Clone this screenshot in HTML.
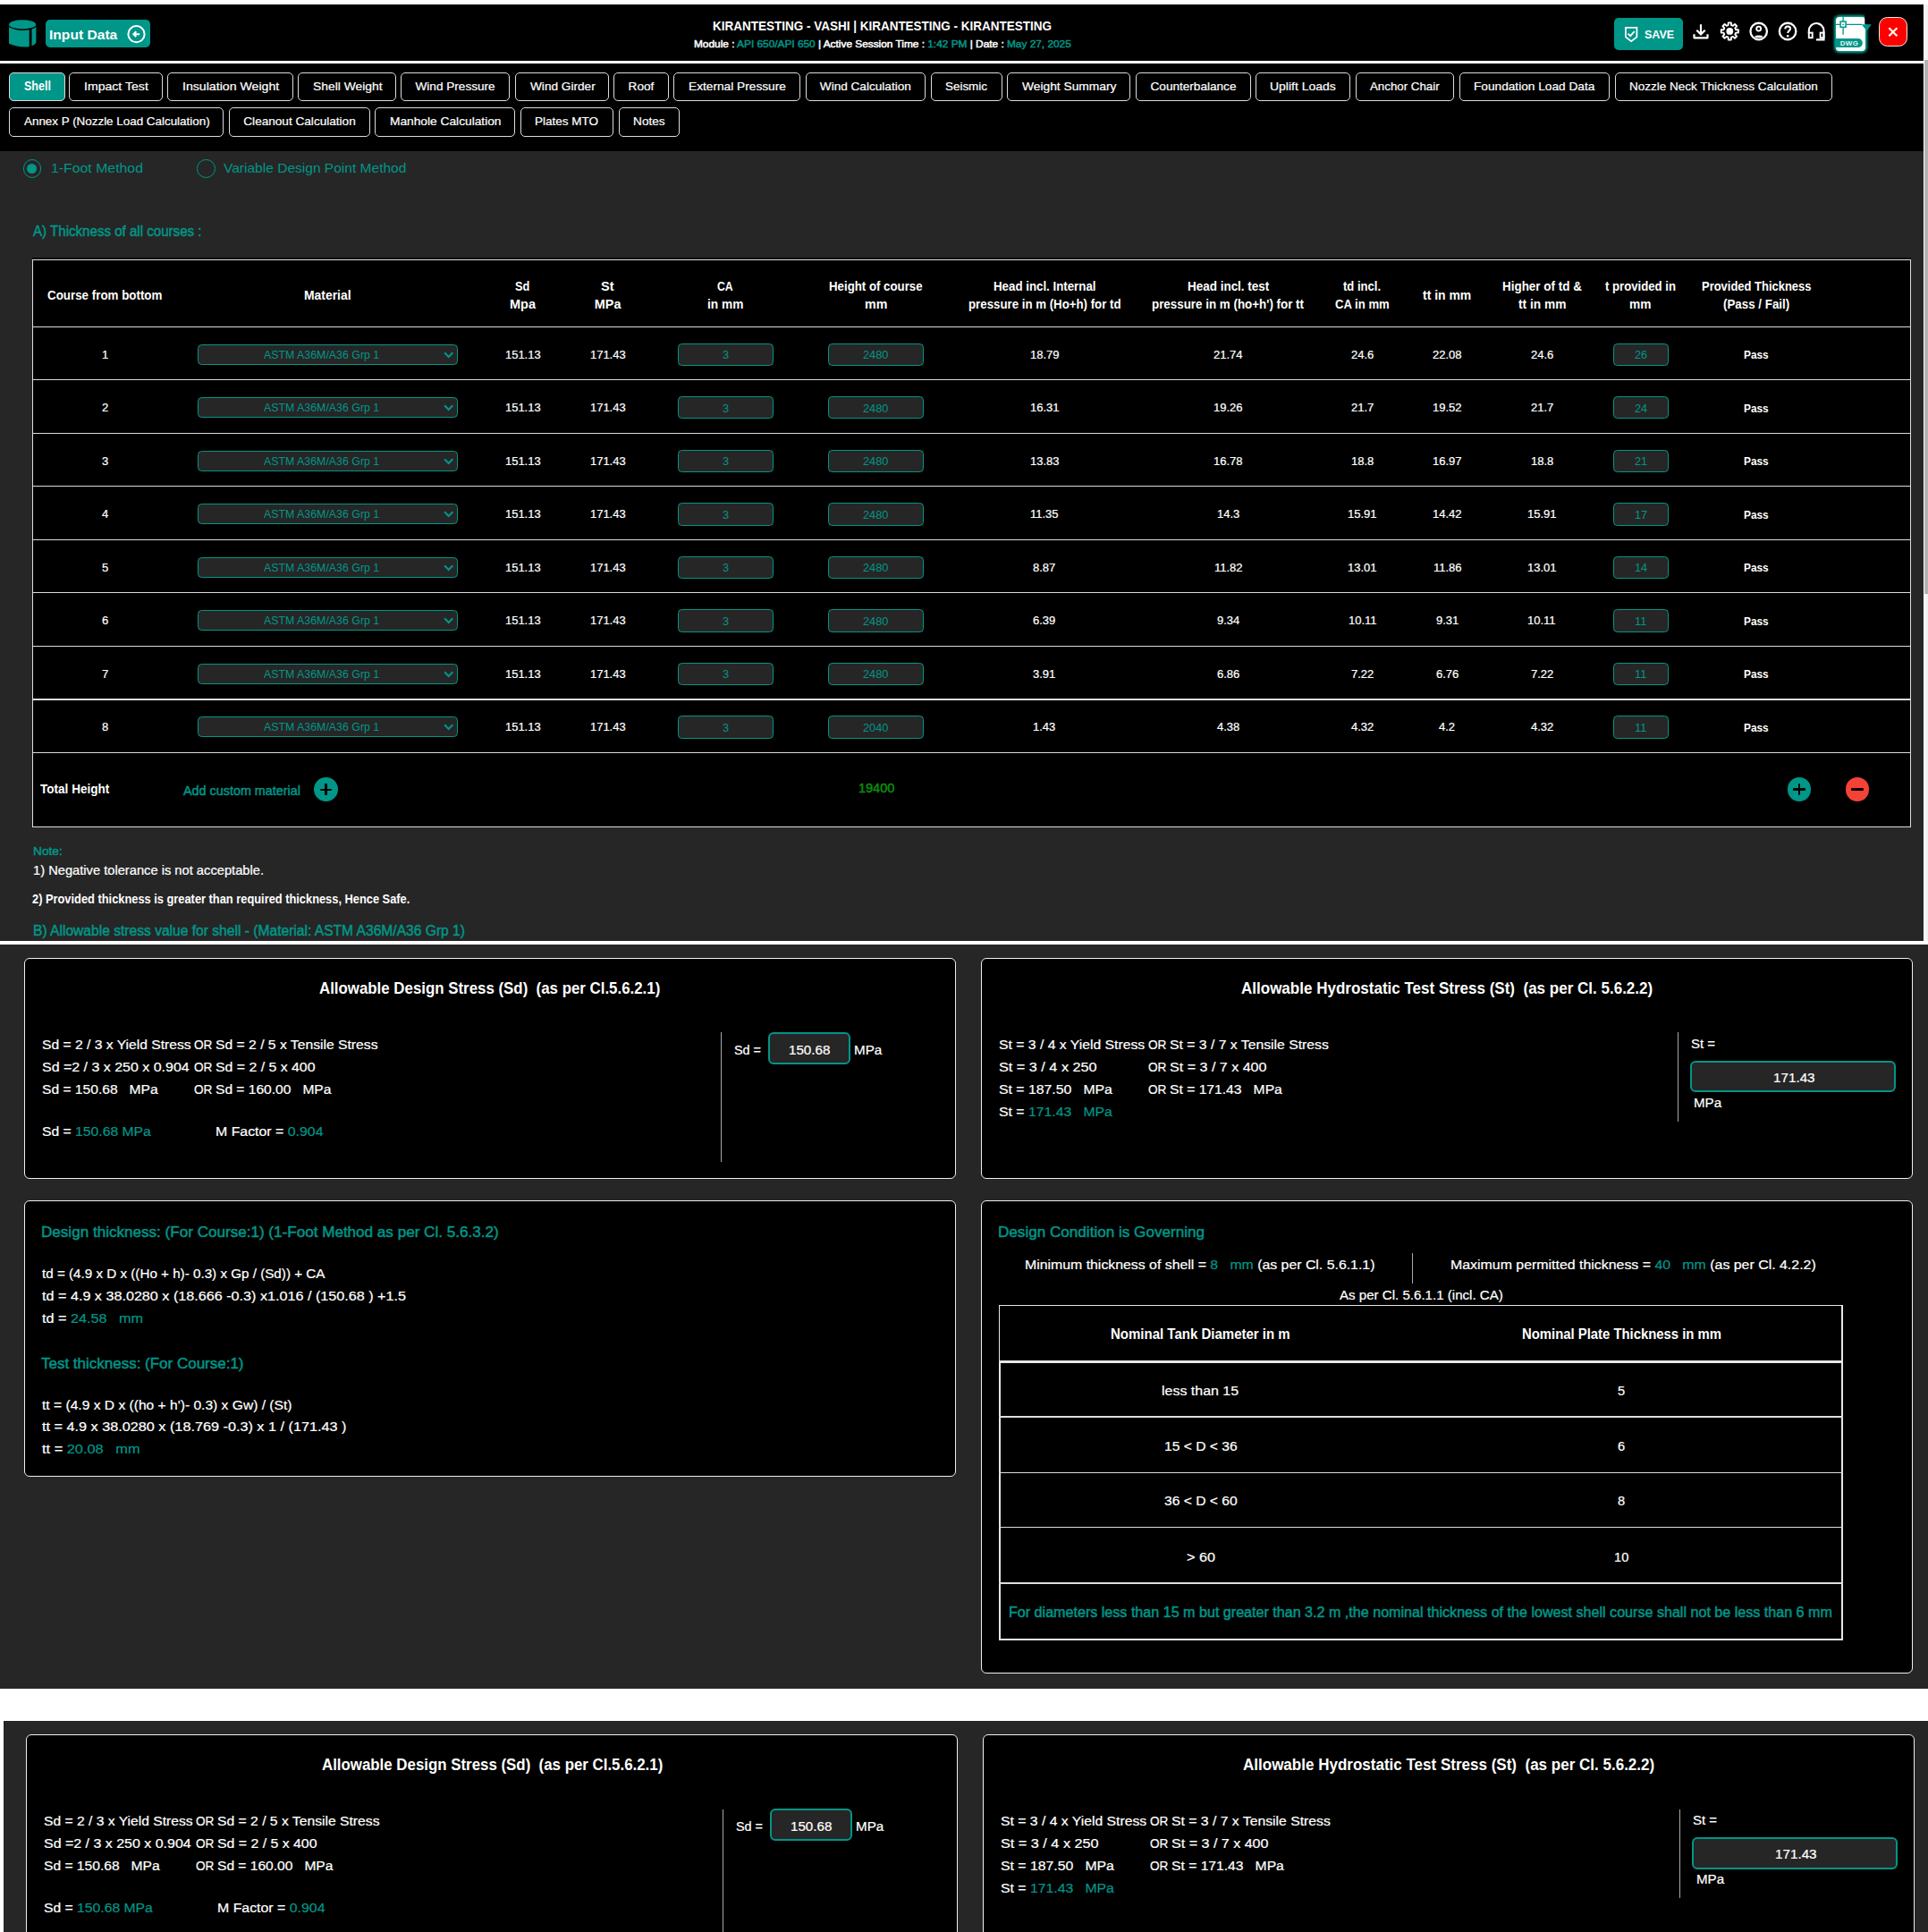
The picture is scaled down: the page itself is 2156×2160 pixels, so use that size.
<!DOCTYPE html>
<html lang="en"><head><meta charset="utf-8"><title>Shell Design</title>
<style>
html,body{margin:0;padding:0;width:2156px;height:2160px;overflow:hidden;background:#fff}
#root{position:absolute;left:0;top:0;width:2156px;height:2160px;overflow:hidden;background:#fff;font-family:"Liberation Sans",sans-serif}
.a{position:absolute;display:block}
.t{position:absolute;white-space:pre;line-height:1;transform-origin:0 0}
</style></head>
<body>
<div id="root">
<div class="a" style="left:0.00px;top:5.20px;width:2151.30px;height:63.30px;background:#000;"></div>
<div class="a" style="left:0.00px;top:68.40px;width:2151.30px;height:2.40px;background:#fff;"></div>
<div class="a" style="left:0.00px;top:70.80px;width:2151.30px;height:98.70px;background:#000;"></div>
<div class="a" style="left:0.00px;top:169.40px;width:2151.30px;height:882.40px;background:#262626;"></div>
<div class="a" style="left:2153.20px;top:4.60px;width:2.80px;height:1047.20px;background:#f2f2f2;"></div>
<div class="a" style="left:2152.40px;top:67.30px;width:3.60px;height:596.40px;background:#b2b2b2;"></div>
<div class="a" style="left:0.00px;top:1056.10px;width:2156.00px;height:831.90px;background:#262626;"></div>
<div class="a" style="left:4.00px;top:1924.20px;width:2152.00px;height:240.00px;background:#262626;"></div>
<svg class="a" style="left:9px;top:21px;width:33px;height:33px;overflow:visible" viewBox="9 21 33 33" >
<ellipse cx="25.1" cy="27.4" rx="15.1" ry="5.1" fill="#009688"/>
<path d="M10 30.300 Q20 35.600 32.700 33.300 L32.700 52.200 Q20 53.400 10 48.800 Z" fill="#009688"/>
<path d="M35.500 32.600 Q38.500 31.600 40.400 30 L40.400 47.800 Q38.800 50 35.500 51.400 Z" fill="#009688"/></svg>
<div class="a" style="left:50.50px;top:22.10px;width:117.80px;height:30.60px;background:#009688;border-radius:5px;"></div>
<svg class="a" style="left:140px;top:26px;width:25px;height:25px;overflow:visible" viewBox="140 26 25 25" ><circle cx="152.5" cy="38.200" r="9.100" fill="none" stroke="#fff" stroke-width="2"/>
<path d="M156.200 38.200H150M152.300 35.300l-2.900 2.900 2.900 2.900" fill="none" stroke="#fff" stroke-width="2.100" stroke-linecap="butt" stroke-linejoin="miter"/></svg>
<div class="a" style="left:1804.60px;top:20.00px;width:77.50px;height:36.10px;background:#009688;border-radius:5px;"></div>
<svg class="a" style="left:1814px;top:27px;width:20px;height:23px;overflow:visible" viewBox="1814 27 20 23" ><path d="M1817.900 30.800h12.500v10.600l-6.250 4.800-6.250-4.800z" fill="none" stroke="#fff" stroke-width="1.800" stroke-linejoin="miter"/>
<path d="M1820.500 37.600l2.700 2.500 4.500-5" fill="none" stroke="#fff" stroke-width="1.800"/></svg>
<svg class="a" style="left:1890px;top:24px;width:24px;height:24px;overflow:visible" viewBox="1890 24 24 24" ><path d="M1902 27.200V38M1897.300 33.800l4.700 4.600 4.700-4.600" fill="none" stroke="#fff" stroke-width="2.200" stroke-linecap="butt" stroke-linejoin="miter"/>
<path d="M1894.500 38.200v4.100h15v-4.100" fill="none" stroke="#fff" stroke-width="2.200" stroke-linejoin="round"/></svg>
<svg class="a" style="left:1922px;top:23px;width:25px;height:25px;overflow:visible" viewBox="1922 23 25 25" ><path d="M1932.61 28.11L1932.71 25.33L1935.89 25.33L1935.99 28.11L1937.91 28.90L1939.94 27.01L1942.19 29.26L1940.30 31.29L1941.09 33.21L1943.87 33.31L1943.87 36.49L1941.09 36.59L1940.30 38.51L1942.19 40.54L1939.94 42.79L1937.91 40.90L1935.99 41.69L1935.89 44.47L1932.71 44.47L1932.61 41.69L1930.69 40.90L1928.66 42.79L1926.41 40.54L1928.30 38.51L1927.51 36.59L1924.73 36.49L1924.73 33.31L1927.51 33.21L1928.30 31.29L1926.41 29.26L1928.66 27.01L1930.69 28.90Z" fill="none" stroke="#fff" stroke-width="1.900" stroke-linejoin="round"/>
<circle cx="1934.300" cy="34.900" r="3.900" fill="#fff"/></svg>
<svg class="a" style="left:1955px;top:23px;width:24px;height:24px;overflow:visible" viewBox="1955 23 24 24" ><circle cx="1966.700" cy="35" r="9.250" fill="none" stroke="#fff" stroke-width="2.300"/>
<circle cx="1966.700" cy="32.100" r="2.500" fill="none" stroke="#fff" stroke-width="1.900"/>
<ellipse cx="1966.700" cy="40.900" rx="4.300" ry="1.400" fill="#fff"/></svg>
<svg class="a" style="left:1987px;top:23px;width:24px;height:24px;overflow:visible" viewBox="1987 23 24 24" ><circle cx="1999.100" cy="35" r="9.250" fill="none" stroke="#fff" stroke-width="2.300"/>
<path d="M1996.200 32.400c.1-1.900 1.300-2.900 3-2.900s2.900 1 2.900 2.600c0 2.200-2.900 2.400-2.900 4.900" fill="none" stroke="#fff" stroke-width="2"/>
<circle cx="1999.200" cy="40.300" r="1.250" fill="#fff"/></svg>
<svg class="a" style="left:2019px;top:23px;width:24px;height:25px;overflow:visible" viewBox="2019 23 24 25" ><path d="M2022.800 37.500V34.400a8.350 8.350 0 0 1 16.700 0V44.400H2031" fill="none" stroke="#fff" stroke-width="2.100" stroke-linejoin="miter"/>
<rect x="2022.800" y="36.600" width="3.900" height="5.600" fill="none" stroke="#fff" stroke-width="1.900"/>
<rect x="2035.600" y="36.600" width="3.900" height="5.600" fill="none" stroke="#fff" stroke-width="1.900"/></svg>
<div class="a" style="left:2052.8px;top:18.6px;width:33.4px;height:38.8px;background:#fff;border-radius:4px;box-shadow:0 0 3px 2px rgba(0,190,170,.9)"></div>
<svg class="a" style="left:2050px;top:16px;width:46px;height:44px;overflow:visible" viewBox="2050 16 46 44" >
<rect x="2085.300" y="16" width="6" height="11.200" fill="#000"/>
<path d="M2081.700 27.200h11.100l-5.400 7.300z" fill="#009688"/>
<path d="M2052.800 27.400H2082M2061.100 18.600V38.800" stroke="#009688" stroke-width="1.300" fill="none"/>
<rect x="2058.100" y="24.100" width="6" height="6.300" fill="#fff" stroke="#009688" stroke-width="1.500"/>
<rect x="2060.300" y="26.700" width="1.600" height="1.300" fill="#009688"/>
<path d="M2052.800 43.100H2077.800a5 5 0 0 1 0 10H2052.800z" fill="#009688"/>
<text x="2068" y="51.100" font-family="Liberation Sans" font-weight="700" font-size="7.900" fill="#e8f5f3" text-anchor="middle" letter-spacing=".4">DWG</text></svg>
<div class="a" style="left:2101.20px;top:19.10px;width:32.30px;height:32.70px;background:#ff0000;border:1.2px solid #f0ead8;border-radius:9.5px;box-sizing:border-box;"></div>
<svg class="a" style="left:2108px;top:27px;width:18px;height:18px;overflow:visible" viewBox="2108 27 18 18" ><path d="M2112.400 31.300l9 9M2121.400 31.300l-9 9" stroke="#fff" stroke-width="2.100" stroke-linecap="butt" fill="none"/></svg>
<div class="a" style="left:10.30px;top:80.70px;width:62.50px;height:32.70px;background:#009688;border:1.5px solid #dcdcdc;border-radius:5px;box-sizing:border-box;"></div>
<div class="a" style="left:77.30px;top:80.70px;width:104.40px;height:32.70px;background:#000;border:1.5px solid #dcdcdc;border-radius:5px;box-sizing:border-box;"></div>
<div class="a" style="left:187.20px;top:80.70px;width:140.80px;height:32.70px;background:#000;border:1.5px solid #dcdcdc;border-radius:5px;box-sizing:border-box;"></div>
<div class="a" style="left:333.20px;top:80.70px;width:110.10px;height:32.70px;background:#000;border:1.5px solid #dcdcdc;border-radius:5px;box-sizing:border-box;"></div>
<div class="a" style="left:448.20px;top:80.70px;width:121.80px;height:32.70px;background:#000;border:1.5px solid #dcdcdc;border-radius:5px;box-sizing:border-box;"></div>
<div class="a" style="left:576.20px;top:80.70px;width:105.30px;height:32.70px;background:#000;border:1.5px solid #dcdcdc;border-radius:5px;box-sizing:border-box;"></div>
<div class="a" style="left:686.30px;top:80.70px;width:61.30px;height:32.70px;background:#000;border:1.5px solid #dcdcdc;border-radius:5px;box-sizing:border-box;"></div>
<div class="a" style="left:753.40px;top:80.70px;width:141.50px;height:32.70px;background:#000;border:1.5px solid #dcdcdc;border-radius:5px;box-sizing:border-box;"></div>
<div class="a" style="left:900.50px;top:80.70px;width:134.70px;height:32.70px;background:#000;border:1.5px solid #dcdcdc;border-radius:5px;box-sizing:border-box;"></div>
<div class="a" style="left:1041.00px;top:80.70px;width:79.60px;height:32.70px;background:#000;border:1.5px solid #dcdcdc;border-radius:5px;box-sizing:border-box;"></div>
<div class="a" style="left:1126.20px;top:80.70px;width:138.10px;height:32.70px;background:#000;border:1.5px solid #dcdcdc;border-radius:5px;box-sizing:border-box;"></div>
<div class="a" style="left:1270.20px;top:80.70px;width:128.60px;height:32.70px;background:#000;border:1.5px solid #dcdcdc;border-radius:5px;box-sizing:border-box;"></div>
<div class="a" style="left:1404.00px;top:80.70px;width:106.30px;height:32.70px;background:#000;border:1.5px solid #dcdcdc;border-radius:5px;box-sizing:border-box;"></div>
<div class="a" style="left:1516.00px;top:80.70px;width:110.20px;height:32.70px;background:#000;border:1.5px solid #dcdcdc;border-radius:5px;box-sizing:border-box;"></div>
<div class="a" style="left:1631.70px;top:80.70px;width:167.90px;height:32.70px;background:#000;border:1.5px solid #dcdcdc;border-radius:5px;box-sizing:border-box;"></div>
<div class="a" style="left:1805.70px;top:80.70px;width:243.30px;height:32.70px;background:#000;border:1.5px solid #dcdcdc;border-radius:5px;box-sizing:border-box;"></div>
<div class="a" style="left:10.30px;top:119.90px;width:240.20px;height:32.70px;background:#000;border:1.5px solid #dcdcdc;border-radius:5px;box-sizing:border-box;"></div>
<div class="a" style="left:256.00px;top:119.90px;width:158.00px;height:32.70px;background:#000;border:1.5px solid #dcdcdc;border-radius:5px;box-sizing:border-box;"></div>
<div class="a" style="left:419.30px;top:119.90px;width:157.10px;height:32.70px;background:#000;border:1.5px solid #dcdcdc;border-radius:5px;box-sizing:border-box;"></div>
<div class="a" style="left:582.00px;top:119.90px;width:103.70px;height:32.70px;background:#000;border:1.5px solid #dcdcdc;border-radius:5px;box-sizing:border-box;"></div>
<div class="a" style="left:691.80px;top:119.90px;width:68.10px;height:32.70px;background:#000;border:1.5px solid #dcdcdc;border-radius:5px;box-sizing:border-box;"></div>
<div class="a" style="left:25.5px;top:178.1px;width:20.8px;height:20.8px;border:1.7px solid #009688;border-radius:50%;box-sizing:border-box"></div>
<div class="a" style="left:30.4px;top:183px;width:11px;height:11px;background:#009688;border-radius:50%"></div>
<div class="a" style="left:219.8px;top:178.1px;width:20.8px;height:20.8px;border:1.7px solid #009688;border-radius:50%;box-sizing:border-box"></div>
<div class="a" style="left:35.70px;top:288.00px;width:2101.50px;height:1.60px;background:#0a0a0a;"></div>
<div class="a" style="left:36.00px;top:289.60px;width:2100.90px;height:635.40px;background:#000;border:1px solid #dcdcdc;box-sizing:border-box;"></div>
<div class="a" style="left:36.00px;top:364.85px;width:2100.90px;height:1.10px;background:#dcdcdc;"></div>
<div class="a" style="left:36.00px;top:424.36px;width:2100.90px;height:1.10px;background:#dcdcdc;"></div>
<div class="a" style="left:36.00px;top:483.87px;width:2100.90px;height:1.10px;background:#dcdcdc;"></div>
<div class="a" style="left:36.00px;top:543.38px;width:2100.90px;height:1.10px;background:#dcdcdc;"></div>
<div class="a" style="left:36.00px;top:602.89px;width:2100.90px;height:1.10px;background:#dcdcdc;"></div>
<div class="a" style="left:36.00px;top:662.40px;width:2100.90px;height:1.10px;background:#dcdcdc;"></div>
<div class="a" style="left:36.00px;top:721.91px;width:2100.90px;height:1.10px;background:#dcdcdc;"></div>
<div class="a" style="left:36.00px;top:781.42px;width:2100.90px;height:1.10px;background:#dcdcdc;"></div>
<div class="a" style="left:36.00px;top:840.93px;width:2100.90px;height:1.10px;background:#dcdcdc;"></div>
<div class="a" style="left:221.10px;top:384.80px;width:291.20px;height:23.00px;background:#262626;border:1.5px solid #009688;border-radius:4.5px;box-sizing:border-box;"></div>
<svg class="a" style="left:496.3px;top:392.6px;width:11.4px;height:8px" viewBox="0 0 11.4 8" fill="none" stroke="#009688" stroke-width="2.1" stroke-linecap="butt" stroke-linejoin="miter"><path d="M1.100 1.300l4.600 4.600 4.600-4.600"/></svg>
<div class="a" style="left:757.80px;top:383.80px;width:107.20px;height:25.20px;background:#262626;border:1.5px solid #009688;border-radius:4.5px;box-sizing:border-box;"></div>
<div class="a" style="left:926.10px;top:383.80px;width:107.10px;height:25.20px;background:#262626;border:1.5px solid #009688;border-radius:4.5px;box-sizing:border-box;"></div>
<div class="a" style="left:1803.50px;top:383.80px;width:62.70px;height:25.20px;background:#262626;border:1.5px solid #009688;border-radius:4.5px;box-sizing:border-box;"></div>
<div class="a" style="left:221.10px;top:444.31px;width:291.20px;height:23.00px;background:#262626;border:1.5px solid #009688;border-radius:4.5px;box-sizing:border-box;"></div>
<svg class="a" style="left:496.3px;top:452.1px;width:11.4px;height:8px" viewBox="0 0 11.4 8" fill="none" stroke="#009688" stroke-width="2.1" stroke-linecap="butt" stroke-linejoin="miter"><path d="M1.100 1.300l4.600 4.600 4.600-4.600"/></svg>
<div class="a" style="left:757.80px;top:443.31px;width:107.20px;height:25.20px;background:#262626;border:1.5px solid #009688;border-radius:4.5px;box-sizing:border-box;"></div>
<div class="a" style="left:926.10px;top:443.31px;width:107.10px;height:25.20px;background:#262626;border:1.5px solid #009688;border-radius:4.5px;box-sizing:border-box;"></div>
<div class="a" style="left:1803.50px;top:443.31px;width:62.70px;height:25.20px;background:#262626;border:1.5px solid #009688;border-radius:4.5px;box-sizing:border-box;"></div>
<div class="a" style="left:221.10px;top:503.82px;width:291.20px;height:23.00px;background:#262626;border:1.5px solid #009688;border-radius:4.5px;box-sizing:border-box;"></div>
<svg class="a" style="left:496.3px;top:511.6px;width:11.4px;height:8px" viewBox="0 0 11.4 8" fill="none" stroke="#009688" stroke-width="2.1" stroke-linecap="butt" stroke-linejoin="miter"><path d="M1.100 1.300l4.600 4.600 4.600-4.600"/></svg>
<div class="a" style="left:757.80px;top:502.82px;width:107.20px;height:25.20px;background:#262626;border:1.5px solid #009688;border-radius:4.5px;box-sizing:border-box;"></div>
<div class="a" style="left:926.10px;top:502.82px;width:107.10px;height:25.20px;background:#262626;border:1.5px solid #009688;border-radius:4.5px;box-sizing:border-box;"></div>
<div class="a" style="left:1803.50px;top:502.82px;width:62.70px;height:25.20px;background:#262626;border:1.5px solid #009688;border-radius:4.5px;box-sizing:border-box;"></div>
<div class="a" style="left:221.10px;top:563.33px;width:291.20px;height:23.00px;background:#262626;border:1.5px solid #009688;border-radius:4.5px;box-sizing:border-box;"></div>
<svg class="a" style="left:496.3px;top:571.1px;width:11.4px;height:8px" viewBox="0 0 11.4 8" fill="none" stroke="#009688" stroke-width="2.1" stroke-linecap="butt" stroke-linejoin="miter"><path d="M1.100 1.300l4.600 4.600 4.600-4.600"/></svg>
<div class="a" style="left:757.80px;top:562.33px;width:107.20px;height:25.20px;background:#262626;border:1.5px solid #009688;border-radius:4.5px;box-sizing:border-box;"></div>
<div class="a" style="left:926.10px;top:562.33px;width:107.10px;height:25.20px;background:#262626;border:1.5px solid #009688;border-radius:4.5px;box-sizing:border-box;"></div>
<div class="a" style="left:1803.50px;top:562.33px;width:62.70px;height:25.20px;background:#262626;border:1.5px solid #009688;border-radius:4.5px;box-sizing:border-box;"></div>
<div class="a" style="left:221.10px;top:622.84px;width:291.20px;height:23.00px;background:#262626;border:1.5px solid #009688;border-radius:4.5px;box-sizing:border-box;"></div>
<svg class="a" style="left:496.3px;top:630.6px;width:11.4px;height:8px" viewBox="0 0 11.4 8" fill="none" stroke="#009688" stroke-width="2.1" stroke-linecap="butt" stroke-linejoin="miter"><path d="M1.100 1.300l4.600 4.600 4.600-4.600"/></svg>
<div class="a" style="left:757.80px;top:621.84px;width:107.20px;height:25.20px;background:#262626;border:1.5px solid #009688;border-radius:4.5px;box-sizing:border-box;"></div>
<div class="a" style="left:926.10px;top:621.84px;width:107.10px;height:25.20px;background:#262626;border:1.5px solid #009688;border-radius:4.5px;box-sizing:border-box;"></div>
<div class="a" style="left:1803.50px;top:621.84px;width:62.70px;height:25.20px;background:#262626;border:1.5px solid #009688;border-radius:4.5px;box-sizing:border-box;"></div>
<div class="a" style="left:221.10px;top:682.35px;width:291.20px;height:23.00px;background:#262626;border:1.5px solid #009688;border-radius:4.5px;box-sizing:border-box;"></div>
<svg class="a" style="left:496.3px;top:690.2px;width:11.4px;height:8px" viewBox="0 0 11.4 8" fill="none" stroke="#009688" stroke-width="2.1" stroke-linecap="butt" stroke-linejoin="miter"><path d="M1.100 1.300l4.600 4.600 4.600-4.600"/></svg>
<div class="a" style="left:757.80px;top:681.35px;width:107.20px;height:25.20px;background:#262626;border:1.5px solid #009688;border-radius:4.5px;box-sizing:border-box;"></div>
<div class="a" style="left:926.10px;top:681.35px;width:107.10px;height:25.20px;background:#262626;border:1.5px solid #009688;border-radius:4.5px;box-sizing:border-box;"></div>
<div class="a" style="left:1803.50px;top:681.35px;width:62.70px;height:25.20px;background:#262626;border:1.5px solid #009688;border-radius:4.5px;box-sizing:border-box;"></div>
<div class="a" style="left:221.10px;top:741.86px;width:291.20px;height:23.00px;background:#262626;border:1.5px solid #009688;border-radius:4.5px;box-sizing:border-box;"></div>
<svg class="a" style="left:496.3px;top:749.7px;width:11.4px;height:8px" viewBox="0 0 11.4 8" fill="none" stroke="#009688" stroke-width="2.1" stroke-linecap="butt" stroke-linejoin="miter"><path d="M1.100 1.300l4.600 4.600 4.600-4.600"/></svg>
<div class="a" style="left:757.80px;top:740.86px;width:107.20px;height:25.20px;background:#262626;border:1.5px solid #009688;border-radius:4.5px;box-sizing:border-box;"></div>
<div class="a" style="left:926.10px;top:740.86px;width:107.10px;height:25.20px;background:#262626;border:1.5px solid #009688;border-radius:4.5px;box-sizing:border-box;"></div>
<div class="a" style="left:1803.50px;top:740.86px;width:62.70px;height:25.20px;background:#262626;border:1.5px solid #009688;border-radius:4.5px;box-sizing:border-box;"></div>
<div class="a" style="left:221.10px;top:801.37px;width:291.20px;height:23.00px;background:#262626;border:1.5px solid #009688;border-radius:4.5px;box-sizing:border-box;"></div>
<svg class="a" style="left:496.3px;top:809.2px;width:11.4px;height:8px" viewBox="0 0 11.4 8" fill="none" stroke="#009688" stroke-width="2.1" stroke-linecap="butt" stroke-linejoin="miter"><path d="M1.100 1.300l4.600 4.600 4.600-4.600"/></svg>
<div class="a" style="left:757.80px;top:800.37px;width:107.20px;height:25.20px;background:#262626;border:1.5px solid #009688;border-radius:4.5px;box-sizing:border-box;"></div>
<div class="a" style="left:926.10px;top:800.37px;width:107.10px;height:25.20px;background:#262626;border:1.5px solid #009688;border-radius:4.5px;box-sizing:border-box;"></div>
<div class="a" style="left:1803.50px;top:800.37px;width:62.70px;height:25.20px;background:#262626;border:1.5px solid #009688;border-radius:4.5px;box-sizing:border-box;"></div>
<div class="a" style="left:351.1px;top:869.1px;width:26.8px;height:26.8px;border-radius:50%;background:#009688"></div>
<div class="a" style="left:357.9px;top:881.5px;width:13.2px;height:2.8px;background:#000;border-radius:1px"></div>
<div class="a" style="left:363.1px;top:876.3px;width:2.8px;height:13.2px;background:#000;border-radius:1px"></div>
<div class="a" style="left:1998.6px;top:868.9px;width:26.8px;height:26.8px;border-radius:50%;background:#009688"></div>
<div class="a" style="left:2005.4px;top:881.3px;width:13.2px;height:2.8px;background:#000;border-radius:1px"></div>
<div class="a" style="left:2010.6px;top:876.1px;width:2.8px;height:13.2px;background:#000;border-radius:1px"></div>
<div class="a" style="left:2063.6px;top:868.9px;width:26.8px;height:26.8px;border-radius:50%;background:#f44336"></div>
<div class="a" style="left:2070.4px;top:881.3px;width:13.2px;height:2.8px;background:#000;border-radius:1px"></div>
<div class="a" style="left:26.80px;top:1070.60px;width:1042.40px;height:247.90px;background:#000;border:1.4px solid #f0f0f0;border-radius:6px;box-sizing:border-box;"></div>
<div class="a" style="left:805.90px;top:1154.40px;width:1.30px;height:144.40px;background:#a8a8a8;"></div>
<div class="a" style="left:858.90px;top:1154.00px;width:92.10px;height:35.80px;background:#262626;border:2px solid #009688;border-radius:6px;box-sizing:border-box;"></div>
<div class="a" style="left:1096.50px;top:1070.60px;width:1042.40px;height:247.90px;background:#000;border:1.4px solid #f0f0f0;border-radius:6px;box-sizing:border-box;"></div>
<div class="a" style="left:1875.50px;top:1154.40px;width:1.30px;height:99.60px;background:#a8a8a8;"></div>
<div class="a" style="left:1890.00px;top:1185.80px;width:230.20px;height:35.70px;background:#262626;border:2px solid #009688;border-radius:6px;box-sizing:border-box;"></div>
<div class="a" style="left:29.00px;top:1938.70px;width:1042.40px;height:247.90px;background:#000;border:1.4px solid #f0f0f0;border-radius:6px;box-sizing:border-box;"></div>
<div class="a" style="left:808.10px;top:2022.50px;width:1.30px;height:144.40px;background:#a8a8a8;"></div>
<div class="a" style="left:861.10px;top:2022.10px;width:92.10px;height:35.80px;background:#262626;border:2px solid #009688;border-radius:6px;box-sizing:border-box;"></div>
<div class="a" style="left:1098.70px;top:1938.70px;width:1042.40px;height:247.90px;background:#000;border:1.4px solid #f0f0f0;border-radius:6px;box-sizing:border-box;"></div>
<div class="a" style="left:1877.70px;top:2022.50px;width:1.30px;height:99.60px;background:#a8a8a8;"></div>
<div class="a" style="left:1892.20px;top:2053.90px;width:230.20px;height:35.70px;background:#262626;border:2px solid #009688;border-radius:6px;box-sizing:border-box;"></div>
<div class="a" style="left:26.80px;top:1341.80px;width:1042.40px;height:309.20px;background:#000;border:1.4px solid #f0f0f0;border-radius:6px;box-sizing:border-box;"></div>
<div class="a" style="left:1096.50px;top:1341.80px;width:1042.40px;height:529.60px;background:#000;border:1.4px solid #f0f0f0;border-radius:6px;box-sizing:border-box;"></div>
<div class="a" style="left:1579.00px;top:1401.00px;width:1.30px;height:33.60px;background:#a8a8a8;"></div>
<div class="a" style="left:1116.90px;top:1458.70px;width:944.20px;height:375.10px;background:#000;box-sizing:border-box;border-style:solid;border-color:#e6e6e6;border-width:1.4px 2.3px 2.5px 1.6px;"></div>
<div class="a" style="left:1116.90px;top:1521.00px;width:944.20px;height:2.80px;background:#e6e6e6;"></div>
<div class="a" style="left:1116.90px;top:1522.00px;width:2.30px;height:311.80px;background:#e6e6e6;"></div>
<div class="a" style="left:1116.90px;top:1583.40px;width:944.20px;height:1.60px;background:#dedede;"></div>
<div class="a" style="left:1116.90px;top:1645.50px;width:944.20px;height:1.60px;background:#dedede;"></div>
<div class="a" style="left:1116.90px;top:1706.80px;width:944.20px;height:1.60px;background:#dedede;"></div>
<div class="a" style="left:1116.90px;top:1769.00px;width:944.20px;height:1.60px;background:#dedede;"></div>
<span class="t" style="left:54.70px;top:31.00px;font-size:15.4px;color:#fff;font-weight:700;transform:scaleX(1.0140);">Input Data</span>
<span class="t" style="left:797.10px;top:21.00px;font-size:15.3px;color:#fff;font-weight:700;transform:scaleX(0.8819);">KIRANTESTING - VASHI | KIRANTESTING - KIRANTESTING</span>
<span class="t" style="left:775.60px;top:44.00px;font-size:11.2px;color:#fff;-webkit-text-stroke-width:0.5px;transform:scaleX(1.0591);">Module : <span style="color:#009688">API 650/API 650</span> | Active Session Time : <span style="color:#009688">1:42 PM</span> | Date : <span style="color:#009688">May 27, 2025</span></span>
<span class="t" style="left:1838.80px;top:32.00px;font-size:13.6px;color:#fff;font-weight:700;transform:scaleX(0.9218);">SAVE</span>
<span class="t" style="left:26.60px;top:89.00px;font-size:14.2px;color:#fff;font-weight:700;transform:scaleX(0.8818);">Shell</span>
<span class="t" style="left:93.60px;top:90.00px;font-size:13.6px;color:#fff;-webkit-text-stroke-width:0.22px;transform:scaleX(1.0366);">Impact Test</span>
<span class="t" style="left:203.50px;top:90.00px;font-size:13.6px;color:#fff;-webkit-text-stroke-width:0.22px;transform:scaleX(1.0401);">Insulation Weight</span>
<span class="t" style="left:349.50px;top:90.00px;font-size:13.6px;color:#fff;-webkit-text-stroke-width:0.22px;transform:scaleX(1.0187);">Shell Weight</span>
<span class="t" style="left:464.50px;top:90.00px;font-size:13.6px;color:#fff;-webkit-text-stroke-width:0.22px;">Wind Pressure</span>
<span class="t" style="left:592.50px;top:90.00px;font-size:13.6px;color:#fff;-webkit-text-stroke-width:0.22px;transform:scaleX(1.0025);">Wind Girder</span>
<span class="t" style="left:702.60px;top:90.00px;font-size:13.6px;color:#fff;-webkit-text-stroke-width:0.22px;">Roof</span>
<span class="t" style="left:769.70px;top:90.00px;font-size:13.6px;color:#fff;-webkit-text-stroke-width:0.22px;transform:scaleX(1.0079);">External Pressure</span>
<span class="t" style="left:916.80px;top:90.00px;font-size:13.6px;color:#fff;-webkit-text-stroke-width:0.22px;">Wind Calculation</span>
<span class="t" style="left:1057.30px;top:90.00px;font-size:13.6px;color:#fff;-webkit-text-stroke-width:0.22px;transform:scaleX(0.9875);">Seismic</span>
<span class="t" style="left:1142.50px;top:90.00px;font-size:13.6px;color:#fff;-webkit-text-stroke-width:0.22px;transform:scaleX(1.0144);">Weight Summary</span>
<span class="t" style="left:1286.50px;top:90.00px;font-size:13.6px;color:#fff;-webkit-text-stroke-width:0.22px;">Counterbalance</span>
<span class="t" style="left:1420.30px;top:90.00px;font-size:13.6px;color:#fff;-webkit-text-stroke-width:0.22px;transform:scaleX(1.0265);">Uplift Loads</span>
<span class="t" style="left:1532.30px;top:90.00px;font-size:13.6px;color:#fff;-webkit-text-stroke-width:0.22px;transform:scaleX(0.9780);">Anchor Chair</span>
<span class="t" style="left:1648.00px;top:90.00px;font-size:13.6px;color:#fff;-webkit-text-stroke-width:0.22px;transform:scaleX(1.0057);">Foundation Load Data</span>
<span class="t" style="left:1822.00px;top:90.00px;font-size:13.6px;color:#fff;-webkit-text-stroke-width:0.22px;transform:scaleX(0.9936);">Nozzle Neck Thickness Calculation</span>
<span class="t" style="left:26.60px;top:129.00px;font-size:13.6px;color:#fff;-webkit-text-stroke-width:0.22px;transform:scaleX(0.9859);">Annex P (Nozzle Load Calculation)</span>
<span class="t" style="left:272.30px;top:129.00px;font-size:13.6px;color:#fff;-webkit-text-stroke-width:0.22px;">Cleanout Calculation</span>
<span class="t" style="left:435.60px;top:129.00px;font-size:13.6px;color:#fff;-webkit-text-stroke-width:0.22px;transform:scaleX(1.0107);">Manhole Calculation</span>
<span class="t" style="left:598.30px;top:129.00px;font-size:13.6px;color:#fff;-webkit-text-stroke-width:0.22px;transform:scaleX(0.9942);">Plates MTO</span>
<span class="t" style="left:708.10px;top:129.00px;font-size:13.6px;color:#fff;-webkit-text-stroke-width:0.22px;">Notes</span>
<span class="t" style="left:57.20px;top:181.00px;font-size:14.6px;color:#009688;transform:scaleX(1.0851);">1-Foot Method</span>
<span class="t" style="left:250.40px;top:181.00px;font-size:14.6px;color:#009688;transform:scaleX(1.0646);">Variable Design Point Method</span>
<span class="t" style="left:36.70px;top:250.00px;font-size:16.2px;color:#009688;-webkit-text-stroke-width:0.5px;transform:scaleX(0.9326);">A) Thickness of all courses :</span>
<span class="t" style="left:53.20px;top:323.00px;font-size:14.4px;color:#fff;font-weight:700;transform:scaleX(0.9283);">Course from bottom</span>
<span class="t" style="left:340.40px;top:323.00px;font-size:14.4px;color:#fff;font-weight:700;transform:scaleX(0.9671);">Material</span>
<span class="t" style="left:576.45px;top:313.00px;font-size:14.4px;color:#fff;font-weight:700;transform:scaleX(0.8863);">Sd</span>
<span class="t" style="left:570.10px;top:333.00px;font-size:14.4px;color:#fff;font-weight:700;transform:scaleX(1.0071);">Mpa</span>
<span class="t" style="left:672.35px;top:313.00px;font-size:14.4px;color:#fff;font-weight:700;transform:scaleX(1.0076);">St</span>
<span class="t" style="left:664.80px;top:333.00px;font-size:14.4px;color:#fff;font-weight:700;">MPa</span>
<span class="t" style="left:802.15px;top:313.00px;font-size:14.4px;color:#fff;font-weight:700;transform:scaleX(0.8511);">CA</span>
<span class="t" style="left:790.80px;top:333.00px;font-size:14.4px;color:#fff;font-weight:700;transform:scaleX(0.9530);">in mm</span>
<span class="t" style="left:927.30px;top:313.00px;font-size:14.4px;color:#fff;font-weight:700;transform:scaleX(0.9212);">Height of course</span>
<span class="t" style="left:966.95px;top:333.00px;font-size:14.4px;color:#fff;font-weight:700;transform:scaleX(0.9885);">mm</span>
<span class="t" style="left:1110.65px;top:313.00px;font-size:14.4px;color:#fff;font-weight:700;transform:scaleX(0.9237);">Head incl. Internal</span>
<span class="t" style="left:1082.60px;top:333.00px;font-size:14.4px;color:#fff;font-weight:700;transform:scaleX(0.9216);">pressure in m (Ho+h) for td</span>
<span class="t" style="left:1327.65px;top:313.00px;font-size:14.4px;color:#fff;font-weight:700;transform:scaleX(0.9357);">Head incl. test</span>
<span class="t" style="left:1288.30px;top:333.00px;font-size:14.4px;color:#fff;font-weight:700;transform:scaleX(0.9294);">pressure in m (ho+h') for tt</span>
<span class="t" style="left:1502.40px;top:313.00px;font-size:14.4px;color:#fff;font-weight:700;transform:scaleX(0.9057);">td incl.</span>
<span class="t" style="left:1493.05px;top:333.00px;font-size:14.4px;color:#fff;font-weight:700;transform:scaleX(0.9109);">CA in mm</span>
<span class="t" style="left:1679.75px;top:313.00px;font-size:14.4px;color:#fff;font-weight:700;transform:scaleX(0.9344);">Higher of td &amp;</span>
<span class="t" style="left:1697.50px;top:333.00px;font-size:14.4px;color:#fff;font-weight:700;transform:scaleX(0.9541);">tt in mm</span>
<span class="t" style="left:1795.10px;top:313.00px;font-size:14.4px;color:#fff;font-weight:700;transform:scaleX(0.9148);">t provided in</span>
<span class="t" style="left:1822.40px;top:333.00px;font-size:14.4px;color:#fff;font-weight:700;transform:scaleX(0.9534);">mm</span>
<span class="t" style="left:1902.75px;top:313.00px;font-size:14.4px;color:#fff;font-weight:700;transform:scaleX(0.9009);">Provided Thickness</span>
<span class="t" style="left:1926.90px;top:333.00px;font-size:14.4px;color:#fff;font-weight:700;transform:scaleX(0.9277);">(Pass / Fail)</span>
<span class="t" style="left:1591.40px;top:323.00px;font-size:14.4px;color:#fff;font-weight:700;transform:scaleX(0.9684);">tt in mm</span>
<span class="t" style="left:113.78px;top:391.00px;font-size:12.5px;color:#fff;-webkit-text-stroke-width:0.22px;transform:scaleX(1.0400);">1</span>
<span class="t" style="left:295.00px;top:391.00px;font-size:12.6px;color:#009688;transform:scaleX(0.9818);">ASTM A36M/A36 Grp 1</span>
<span class="t" style="left:564.80px;top:391.00px;font-size:12.5px;color:#fff;-webkit-text-stroke-width:0.22px;transform:scaleX(1.0357);">151.13</span>
<span class="t" style="left:659.80px;top:391.00px;font-size:12.5px;color:#fff;-webkit-text-stroke-width:0.22px;transform:scaleX(1.0357);">171.43</span>
<span class="t" style="left:807.84px;top:390.00px;font-size:13.2px;color:#009688;transform:scaleX(0.9700);">3</span>
<span class="t" style="left:965.42px;top:390.00px;font-size:13.2px;color:#009688;transform:scaleX(0.9700);">2480</span>
<span class="t" style="left:1151.63px;top:391.00px;font-size:12.5px;color:#fff;-webkit-text-stroke-width:0.22px;transform:scaleX(1.0400);">18.79</span>
<span class="t" style="left:1357.03px;top:391.00px;font-size:12.5px;color:#fff;-webkit-text-stroke-width:0.22px;transform:scaleX(1.0400);">21.74</span>
<span class="t" style="left:1510.74px;top:391.00px;font-size:12.5px;color:#fff;-webkit-text-stroke-width:0.22px;transform:scaleX(1.0400);">24.6</span>
<span class="t" style="left:1602.23px;top:391.00px;font-size:12.5px;color:#fff;-webkit-text-stroke-width:0.22px;transform:scaleX(1.0400);">22.08</span>
<span class="t" style="left:1711.54px;top:391.00px;font-size:12.5px;color:#fff;-webkit-text-stroke-width:0.22px;transform:scaleX(1.0400);">24.6</span>
<span class="t" style="left:1827.73px;top:390.00px;font-size:13.2px;color:#009688;transform:scaleX(0.9700);">26</span>
<span class="t" style="left:1950.35px;top:390.00px;font-size:13.6px;color:#fff;font-weight:700;transform:scaleX(0.8724);">Pass</span>
<span class="t" style="left:113.78px;top:450.00px;font-size:12.5px;color:#fff;-webkit-text-stroke-width:0.22px;transform:scaleX(1.0400);">2</span>
<span class="t" style="left:295.00px;top:450.00px;font-size:12.6px;color:#009688;transform:scaleX(0.9818);">ASTM A36M/A36 Grp 1</span>
<span class="t" style="left:564.80px;top:450.00px;font-size:12.5px;color:#fff;-webkit-text-stroke-width:0.22px;transform:scaleX(1.0357);">151.13</span>
<span class="t" style="left:659.80px;top:450.00px;font-size:12.5px;color:#fff;-webkit-text-stroke-width:0.22px;transform:scaleX(1.0357);">171.43</span>
<span class="t" style="left:807.84px;top:450.00px;font-size:13.2px;color:#009688;transform:scaleX(0.9700);">3</span>
<span class="t" style="left:965.42px;top:450.00px;font-size:13.2px;color:#009688;transform:scaleX(0.9700);">2480</span>
<span class="t" style="left:1151.63px;top:450.00px;font-size:12.5px;color:#fff;-webkit-text-stroke-width:0.22px;transform:scaleX(1.0400);">16.31</span>
<span class="t" style="left:1357.03px;top:450.00px;font-size:12.5px;color:#fff;-webkit-text-stroke-width:0.22px;transform:scaleX(1.0400);">19.26</span>
<span class="t" style="left:1510.74px;top:450.00px;font-size:12.5px;color:#fff;-webkit-text-stroke-width:0.22px;transform:scaleX(1.0400);">21.7</span>
<span class="t" style="left:1602.23px;top:450.00px;font-size:12.5px;color:#fff;-webkit-text-stroke-width:0.22px;transform:scaleX(1.0400);">19.52</span>
<span class="t" style="left:1711.54px;top:450.00px;font-size:12.5px;color:#fff;-webkit-text-stroke-width:0.22px;transform:scaleX(1.0400);">21.7</span>
<span class="t" style="left:1827.73px;top:450.00px;font-size:13.2px;color:#009688;transform:scaleX(0.9700);">24</span>
<span class="t" style="left:1950.35px;top:450.00px;font-size:13.6px;color:#fff;font-weight:700;transform:scaleX(0.8724);">Pass</span>
<span class="t" style="left:113.78px;top:510.00px;font-size:12.5px;color:#fff;-webkit-text-stroke-width:0.22px;transform:scaleX(1.0400);">3</span>
<span class="t" style="left:295.00px;top:510.00px;font-size:12.6px;color:#009688;transform:scaleX(0.9818);">ASTM A36M/A36 Grp 1</span>
<span class="t" style="left:564.80px;top:510.00px;font-size:12.5px;color:#fff;-webkit-text-stroke-width:0.22px;transform:scaleX(1.0357);">151.13</span>
<span class="t" style="left:659.80px;top:510.00px;font-size:12.5px;color:#fff;-webkit-text-stroke-width:0.22px;transform:scaleX(1.0357);">171.43</span>
<span class="t" style="left:807.84px;top:509.00px;font-size:13.2px;color:#009688;transform:scaleX(0.9700);">3</span>
<span class="t" style="left:965.42px;top:509.00px;font-size:13.2px;color:#009688;transform:scaleX(0.9700);">2480</span>
<span class="t" style="left:1151.63px;top:510.00px;font-size:12.5px;color:#fff;-webkit-text-stroke-width:0.22px;transform:scaleX(1.0400);">13.83</span>
<span class="t" style="left:1357.03px;top:510.00px;font-size:12.5px;color:#fff;-webkit-text-stroke-width:0.22px;transform:scaleX(1.0400);">16.78</span>
<span class="t" style="left:1510.74px;top:510.00px;font-size:12.5px;color:#fff;-webkit-text-stroke-width:0.22px;transform:scaleX(1.0400);">18.8</span>
<span class="t" style="left:1602.23px;top:510.00px;font-size:12.5px;color:#fff;-webkit-text-stroke-width:0.22px;transform:scaleX(1.0400);">16.97</span>
<span class="t" style="left:1711.54px;top:510.00px;font-size:12.5px;color:#fff;-webkit-text-stroke-width:0.22px;transform:scaleX(1.0400);">18.8</span>
<span class="t" style="left:1827.73px;top:509.00px;font-size:13.2px;color:#009688;transform:scaleX(0.9700);">21</span>
<span class="t" style="left:1950.35px;top:509.00px;font-size:13.6px;color:#fff;font-weight:700;transform:scaleX(0.8724);">Pass</span>
<span class="t" style="left:113.78px;top:569.00px;font-size:12.5px;color:#fff;-webkit-text-stroke-width:0.22px;transform:scaleX(1.0400);">4</span>
<span class="t" style="left:295.00px;top:569.00px;font-size:12.6px;color:#009688;transform:scaleX(0.9818);">ASTM A36M/A36 Grp 1</span>
<span class="t" style="left:564.80px;top:569.00px;font-size:12.5px;color:#fff;-webkit-text-stroke-width:0.22px;transform:scaleX(1.0357);">151.13</span>
<span class="t" style="left:659.80px;top:569.00px;font-size:12.5px;color:#fff;-webkit-text-stroke-width:0.22px;transform:scaleX(1.0357);">171.43</span>
<span class="t" style="left:807.84px;top:569.00px;font-size:13.2px;color:#009688;transform:scaleX(0.9700);">3</span>
<span class="t" style="left:965.42px;top:569.00px;font-size:13.2px;color:#009688;transform:scaleX(0.9700);">2480</span>
<span class="t" style="left:1152.11px;top:569.00px;font-size:12.5px;color:#fff;-webkit-text-stroke-width:0.22px;transform:scaleX(1.0400);">11.35</span>
<span class="t" style="left:1360.64px;top:569.00px;font-size:12.5px;color:#fff;-webkit-text-stroke-width:0.22px;transform:scaleX(1.0400);">14.3</span>
<span class="t" style="left:1507.13px;top:569.00px;font-size:12.5px;color:#fff;-webkit-text-stroke-width:0.22px;transform:scaleX(1.0400);">15.91</span>
<span class="t" style="left:1602.23px;top:569.00px;font-size:12.5px;color:#fff;-webkit-text-stroke-width:0.22px;transform:scaleX(1.0400);">14.42</span>
<span class="t" style="left:1707.93px;top:569.00px;font-size:12.5px;color:#fff;-webkit-text-stroke-width:0.22px;transform:scaleX(1.0400);">15.91</span>
<span class="t" style="left:1827.73px;top:569.00px;font-size:13.2px;color:#009688;transform:scaleX(0.9700);">17</span>
<span class="t" style="left:1950.35px;top:569.00px;font-size:13.6px;color:#fff;font-weight:700;transform:scaleX(0.8724);">Pass</span>
<span class="t" style="left:113.78px;top:629.00px;font-size:12.5px;color:#fff;-webkit-text-stroke-width:0.22px;transform:scaleX(1.0400);">5</span>
<span class="t" style="left:295.00px;top:629.00px;font-size:12.6px;color:#009688;transform:scaleX(0.9818);">ASTM A36M/A36 Grp 1</span>
<span class="t" style="left:564.80px;top:629.00px;font-size:12.5px;color:#fff;-webkit-text-stroke-width:0.22px;transform:scaleX(1.0357);">151.13</span>
<span class="t" style="left:659.80px;top:629.00px;font-size:12.5px;color:#fff;-webkit-text-stroke-width:0.22px;transform:scaleX(1.0357);">171.43</span>
<span class="t" style="left:807.84px;top:628.00px;font-size:13.2px;color:#009688;transform:scaleX(0.9700);">3</span>
<span class="t" style="left:965.42px;top:628.00px;font-size:13.2px;color:#009688;transform:scaleX(0.9700);">2480</span>
<span class="t" style="left:1155.24px;top:629.00px;font-size:12.5px;color:#fff;-webkit-text-stroke-width:0.22px;transform:scaleX(1.0400);">8.87</span>
<span class="t" style="left:1357.51px;top:629.00px;font-size:12.5px;color:#fff;-webkit-text-stroke-width:0.22px;transform:scaleX(1.0400);">11.82</span>
<span class="t" style="left:1507.13px;top:629.00px;font-size:12.5px;color:#fff;-webkit-text-stroke-width:0.22px;transform:scaleX(1.0400);">13.01</span>
<span class="t" style="left:1602.71px;top:629.00px;font-size:12.5px;color:#fff;-webkit-text-stroke-width:0.22px;transform:scaleX(1.0400);">11.86</span>
<span class="t" style="left:1707.93px;top:629.00px;font-size:12.5px;color:#fff;-webkit-text-stroke-width:0.22px;transform:scaleX(1.0400);">13.01</span>
<span class="t" style="left:1827.73px;top:628.00px;font-size:13.2px;color:#009688;transform:scaleX(0.9700);">14</span>
<span class="t" style="left:1950.35px;top:628.00px;font-size:13.6px;color:#fff;font-weight:700;transform:scaleX(0.8724);">Pass</span>
<span class="t" style="left:113.78px;top:688.00px;font-size:12.5px;color:#fff;-webkit-text-stroke-width:0.22px;transform:scaleX(1.0400);">6</span>
<span class="t" style="left:295.00px;top:688.00px;font-size:12.6px;color:#009688;transform:scaleX(0.9818);">ASTM A36M/A36 Grp 1</span>
<span class="t" style="left:564.80px;top:688.00px;font-size:12.5px;color:#fff;-webkit-text-stroke-width:0.22px;transform:scaleX(1.0357);">151.13</span>
<span class="t" style="left:659.80px;top:688.00px;font-size:12.5px;color:#fff;-webkit-text-stroke-width:0.22px;transform:scaleX(1.0357);">171.43</span>
<span class="t" style="left:807.84px;top:688.00px;font-size:13.2px;color:#009688;transform:scaleX(0.9700);">3</span>
<span class="t" style="left:965.42px;top:688.00px;font-size:13.2px;color:#009688;transform:scaleX(0.9700);">2480</span>
<span class="t" style="left:1155.24px;top:688.00px;font-size:12.5px;color:#fff;-webkit-text-stroke-width:0.22px;transform:scaleX(1.0400);">6.39</span>
<span class="t" style="left:1360.64px;top:688.00px;font-size:12.5px;color:#fff;-webkit-text-stroke-width:0.22px;transform:scaleX(1.0400);">9.34</span>
<span class="t" style="left:1507.61px;top:688.00px;font-size:12.5px;color:#fff;-webkit-text-stroke-width:0.22px;transform:scaleX(1.0400);">10.11</span>
<span class="t" style="left:1605.84px;top:688.00px;font-size:12.5px;color:#fff;-webkit-text-stroke-width:0.22px;transform:scaleX(1.0400);">9.31</span>
<span class="t" style="left:1708.41px;top:688.00px;font-size:12.5px;color:#fff;-webkit-text-stroke-width:0.22px;transform:scaleX(1.0400);">10.11</span>
<span class="t" style="left:1828.20px;top:688.00px;font-size:13.2px;color:#009688;transform:scaleX(0.9700);">11</span>
<span class="t" style="left:1950.35px;top:688.00px;font-size:13.6px;color:#fff;font-weight:700;transform:scaleX(0.8724);">Pass</span>
<span class="t" style="left:113.78px;top:748.00px;font-size:12.5px;color:#fff;-webkit-text-stroke-width:0.22px;transform:scaleX(1.0400);">7</span>
<span class="t" style="left:295.00px;top:748.00px;font-size:12.6px;color:#009688;transform:scaleX(0.9818);">ASTM A36M/A36 Grp 1</span>
<span class="t" style="left:564.80px;top:748.00px;font-size:12.5px;color:#fff;-webkit-text-stroke-width:0.22px;transform:scaleX(1.0357);">151.13</span>
<span class="t" style="left:659.80px;top:748.00px;font-size:12.5px;color:#fff;-webkit-text-stroke-width:0.22px;transform:scaleX(1.0357);">171.43</span>
<span class="t" style="left:807.84px;top:747.00px;font-size:13.2px;color:#009688;transform:scaleX(0.9700);">3</span>
<span class="t" style="left:965.42px;top:747.00px;font-size:13.2px;color:#009688;transform:scaleX(0.9700);">2480</span>
<span class="t" style="left:1155.24px;top:748.00px;font-size:12.5px;color:#fff;-webkit-text-stroke-width:0.22px;transform:scaleX(1.0400);">3.91</span>
<span class="t" style="left:1360.64px;top:748.00px;font-size:12.5px;color:#fff;-webkit-text-stroke-width:0.22px;transform:scaleX(1.0400);">6.86</span>
<span class="t" style="left:1510.74px;top:748.00px;font-size:12.5px;color:#fff;-webkit-text-stroke-width:0.22px;transform:scaleX(1.0400);">7.22</span>
<span class="t" style="left:1605.84px;top:748.00px;font-size:12.5px;color:#fff;-webkit-text-stroke-width:0.22px;transform:scaleX(1.0400);">6.76</span>
<span class="t" style="left:1711.54px;top:748.00px;font-size:12.5px;color:#fff;-webkit-text-stroke-width:0.22px;transform:scaleX(1.0400);">7.22</span>
<span class="t" style="left:1828.20px;top:747.00px;font-size:13.2px;color:#009688;transform:scaleX(0.9700);">11</span>
<span class="t" style="left:1950.35px;top:747.00px;font-size:13.6px;color:#fff;font-weight:700;transform:scaleX(0.8724);">Pass</span>
<span class="t" style="left:113.78px;top:807.00px;font-size:12.5px;color:#fff;-webkit-text-stroke-width:0.22px;transform:scaleX(1.0400);">8</span>
<span class="t" style="left:295.00px;top:807.00px;font-size:12.6px;color:#009688;transform:scaleX(0.9818);">ASTM A36M/A36 Grp 1</span>
<span class="t" style="left:564.80px;top:807.00px;font-size:12.5px;color:#fff;-webkit-text-stroke-width:0.22px;transform:scaleX(1.0357);">151.13</span>
<span class="t" style="left:659.80px;top:807.00px;font-size:12.5px;color:#fff;-webkit-text-stroke-width:0.22px;transform:scaleX(1.0357);">171.43</span>
<span class="t" style="left:807.84px;top:807.00px;font-size:13.2px;color:#009688;transform:scaleX(0.9700);">3</span>
<span class="t" style="left:965.42px;top:807.00px;font-size:13.2px;color:#009688;transform:scaleX(0.9700);">2040</span>
<span class="t" style="left:1155.24px;top:807.00px;font-size:12.5px;color:#fff;-webkit-text-stroke-width:0.22px;transform:scaleX(1.0400);">1.43</span>
<span class="t" style="left:1360.64px;top:807.00px;font-size:12.5px;color:#fff;-webkit-text-stroke-width:0.22px;transform:scaleX(1.0400);">4.38</span>
<span class="t" style="left:1510.74px;top:807.00px;font-size:12.5px;color:#fff;-webkit-text-stroke-width:0.22px;transform:scaleX(1.0400);">4.32</span>
<span class="t" style="left:1609.46px;top:807.00px;font-size:12.5px;color:#fff;-webkit-text-stroke-width:0.22px;transform:scaleX(1.0400);">4.2</span>
<span class="t" style="left:1711.54px;top:807.00px;font-size:12.5px;color:#fff;-webkit-text-stroke-width:0.22px;transform:scaleX(1.0400);">4.32</span>
<span class="t" style="left:1828.20px;top:807.00px;font-size:13.2px;color:#009688;transform:scaleX(0.9700);">11</span>
<span class="t" style="left:1950.35px;top:807.00px;font-size:13.6px;color:#fff;font-weight:700;transform:scaleX(0.8724);">Pass</span>
<span class="t" style="left:44.90px;top:874.00px;font-size:15.3px;color:#fff;font-weight:700;transform:scaleX(0.8860);">Total Height</span>
<span class="t" style="left:205.00px;top:877.00px;font-size:14.6px;color:#009688;-webkit-text-stroke-width:0.5px;transform:scaleX(0.9847);">Add custom material</span>
<span class="t" style="left:959.85px;top:875.00px;font-size:13.8px;color:#0a8f0a;-webkit-text-stroke-width:0.5px;transform:scaleX(1.0502);">19400</span>
<span class="t" style="left:36.80px;top:945.00px;font-size:13.3px;color:#009688;-webkit-text-stroke-width:0.5px;transform:scaleX(1.0284);">Note:</span>
<span class="t" style="left:37.00px;top:965.00px;font-size:15.0px;color:#fff;-webkit-text-stroke-width:0.22px;transform:scaleX(0.9791);">1) Negative tolerance is not acceptable.</span>
<span class="t" style="left:36.20px;top:998.00px;font-size:14.6px;color:#fff;font-weight:700;transform:scaleX(0.8795);">2) Provided thickness is greater than required thickness, Hence Safe.</span>
<span class="t" style="left:36.80px;top:1033.00px;font-size:15.8px;color:#009688;-webkit-text-stroke-width:0.5px;transform:scaleX(0.9877);">B) Allowable stress value for shell - (Material: ASTM A36M/A36 Grp 1)</span>
<span class="t" style="left:357.35px;top:1096.00px;font-size:18px;color:#fff;font-weight:700;transform:scaleX(0.9365);">Allowable Design Stress (Sd)  (as per Cl.5.6.2.1)</span>
<span class="t" style="left:47.20px;top:1160.00px;font-size:15.4px;color:#fff;-webkit-text-stroke-width:0.22px;transform:scaleX(1.0169);">Sd = 2 / 3 x Yield Stress</span>
<span class="t" style="left:47.20px;top:1185.00px;font-size:15.4px;color:#fff;-webkit-text-stroke-width:0.22px;transform:scaleX(1.0376);">Sd =2 / 3 x 250 x 0.904</span>
<span class="t" style="left:47.20px;top:1210.00px;font-size:15.4px;color:#fff;-webkit-text-stroke-width:0.22px;transform:scaleX(1.0139);">Sd = 150.68   MPa</span>
<span class="t" style="left:217.00px;top:1160.00px;font-size:15.4px;color:#fff;-webkit-text-stroke-width:0.22px;transform:scaleX(0.8834);">OR</span>
<span class="t" style="left:217.00px;top:1185.00px;font-size:15.4px;color:#fff;-webkit-text-stroke-width:0.22px;transform:scaleX(0.8834);">OR</span>
<span class="t" style="left:217.00px;top:1210.00px;font-size:15.4px;color:#fff;-webkit-text-stroke-width:0.22px;transform:scaleX(0.8834);">OR</span>
<span class="t" style="left:240.70px;top:1160.00px;font-size:15.4px;color:#fff;-webkit-text-stroke-width:0.22px;transform:scaleX(1.0191);">Sd = 2 / 5 x Tensile Stress</span>
<span class="t" style="left:240.70px;top:1185.00px;font-size:15.4px;color:#fff;-webkit-text-stroke-width:0.22px;transform:scaleX(1.0300);">Sd = 2 / 5 x 400</span>
<span class="t" style="left:240.70px;top:1210.00px;font-size:15.4px;color:#fff;-webkit-text-stroke-width:0.22px;transform:scaleX(1.0116);">Sd = 160.00   MPa</span>
<span class="t" style="left:47.20px;top:1257.00px;font-size:15.4px;color:#fff;-webkit-text-stroke-width:0.22px;transform:scaleX(1.0203);">Sd = <span style="color:#009688">150.68 MPa</span></span>
<span class="t" style="left:240.70px;top:1257.00px;font-size:15.4px;color:#fff;-webkit-text-stroke-width:0.22px;transform:scaleX(1.0318);">M Factor = <span style="color:#009688">0.904</span></span>
<span class="t" style="left:821.00px;top:1166.00px;font-size:15.200000000000001px;color:#fff;-webkit-text-stroke-width:0.22px;transform:scaleX(0.9472);">Sd =</span>
<span class="t" style="left:882.15px;top:1167.00px;font-size:14.8px;color:#fff;-webkit-text-stroke-width:0.22px;transform:scaleX(1.0229);">150.68</span>
<span class="t" style="left:955.10px;top:1166.00px;font-size:15.200000000000001px;color:#fff;-webkit-text-stroke-width:0.22px;transform:scaleX(0.9989);">MPa</span>
<span class="t" style="left:1387.50px;top:1096.00px;font-size:18px;color:#fff;font-weight:700;transform:scaleX(0.9453);">Allowable Hydrostatic Test Stress (St)  (as per Cl. 5.6.2.2)</span>
<span class="t" style="left:1116.60px;top:1160.00px;font-size:15.4px;color:#fff;-webkit-text-stroke-width:0.22px;transform:scaleX(1.0229);">St = 3 / 4 x Yield Stress</span>
<span class="t" style="left:1116.60px;top:1185.00px;font-size:15.4px;color:#fff;-webkit-text-stroke-width:0.22px;transform:scaleX(1.0542);">St = 3 / 4 x 250</span>
<span class="t" style="left:1116.60px;top:1210.00px;font-size:15.4px;color:#fff;-webkit-text-stroke-width:0.22px;transform:scaleX(1.0264);">St = 187.50   MPa</span>
<span class="t" style="left:1116.60px;top:1235.00px;font-size:15.4px;color:#fff;-webkit-text-stroke-width:0.22px;transform:scaleX(1.0262);">St = <span style="color:#009688">171.43   MPa</span></span>
<span class="t" style="left:1283.80px;top:1160.00px;font-size:15.4px;color:#fff;-webkit-text-stroke-width:0.22px;transform:scaleX(0.8834);">OR</span>
<span class="t" style="left:1283.80px;top:1185.00px;font-size:15.4px;color:#fff;-webkit-text-stroke-width:0.22px;transform:scaleX(0.8834);">OR</span>
<span class="t" style="left:1283.80px;top:1210.00px;font-size:15.4px;color:#fff;-webkit-text-stroke-width:0.22px;transform:scaleX(0.8834);">OR</span>
<span class="t" style="left:1307.80px;top:1160.00px;font-size:15.4px;color:#fff;-webkit-text-stroke-width:0.22px;transform:scaleX(1.0229);">St = 3 / 7 x Tensile Stress</span>
<span class="t" style="left:1307.80px;top:1185.00px;font-size:15.4px;color:#fff;-webkit-text-stroke-width:0.22px;transform:scaleX(1.0436);">St = 3 / 7 x 400</span>
<span class="t" style="left:1307.80px;top:1210.00px;font-size:15.4px;color:#fff;-webkit-text-stroke-width:0.22px;transform:scaleX(1.0175);">St = 171.43   MPa</span>
<span class="t" style="left:1890.50px;top:1159.00px;font-size:15.200000000000001px;color:#fff;-webkit-text-stroke-width:0.22px;transform:scaleX(0.9871);">St =</span>
<span class="t" style="left:1982.60px;top:1198.00px;font-size:14.8px;color:#fff;-webkit-text-stroke-width:0.22px;transform:scaleX(1.0295);">171.43</span>
<span class="t" style="left:1894.30px;top:1225.00px;font-size:15.200000000000001px;color:#fff;-webkit-text-stroke-width:0.22px;transform:scaleX(0.9957);">MPa</span>
<span class="t" style="left:359.55px;top:1964.00px;font-size:18px;color:#fff;font-weight:700;transform:scaleX(0.9365);">Allowable Design Stress (Sd)  (as per Cl.5.6.2.1)</span>
<span class="t" style="left:49.40px;top:2028.00px;font-size:15.4px;color:#fff;-webkit-text-stroke-width:0.22px;transform:scaleX(1.0169);">Sd = 2 / 3 x Yield Stress</span>
<span class="t" style="left:49.40px;top:2053.00px;font-size:15.4px;color:#fff;-webkit-text-stroke-width:0.22px;transform:scaleX(1.0376);">Sd =2 / 3 x 250 x 0.904</span>
<span class="t" style="left:49.40px;top:2078.00px;font-size:15.4px;color:#fff;-webkit-text-stroke-width:0.22px;transform:scaleX(1.0139);">Sd = 150.68   MPa</span>
<span class="t" style="left:219.20px;top:2028.00px;font-size:15.4px;color:#fff;-webkit-text-stroke-width:0.22px;transform:scaleX(0.8834);">OR</span>
<span class="t" style="left:219.20px;top:2053.00px;font-size:15.4px;color:#fff;-webkit-text-stroke-width:0.22px;transform:scaleX(0.8834);">OR</span>
<span class="t" style="left:219.20px;top:2078.00px;font-size:15.4px;color:#fff;-webkit-text-stroke-width:0.22px;transform:scaleX(0.8834);">OR</span>
<span class="t" style="left:242.90px;top:2028.00px;font-size:15.4px;color:#fff;-webkit-text-stroke-width:0.22px;transform:scaleX(1.0191);">Sd = 2 / 5 x Tensile Stress</span>
<span class="t" style="left:242.90px;top:2053.00px;font-size:15.4px;color:#fff;-webkit-text-stroke-width:0.22px;transform:scaleX(1.0300);">Sd = 2 / 5 x 400</span>
<span class="t" style="left:242.90px;top:2078.00px;font-size:15.4px;color:#fff;-webkit-text-stroke-width:0.22px;transform:scaleX(1.0116);">Sd = 160.00   MPa</span>
<span class="t" style="left:49.40px;top:2125.00px;font-size:15.4px;color:#fff;-webkit-text-stroke-width:0.22px;transform:scaleX(1.0203);">Sd = <span style="color:#009688">150.68 MPa</span></span>
<span class="t" style="left:242.90px;top:2125.00px;font-size:15.4px;color:#fff;-webkit-text-stroke-width:0.22px;transform:scaleX(1.0318);">M Factor = <span style="color:#009688">0.904</span></span>
<span class="t" style="left:823.20px;top:2034.00px;font-size:15.200000000000001px;color:#fff;-webkit-text-stroke-width:0.22px;transform:scaleX(0.9472);">Sd =</span>
<span class="t" style="left:884.35px;top:2035.00px;font-size:14.8px;color:#fff;-webkit-text-stroke-width:0.22px;transform:scaleX(1.0229);">150.68</span>
<span class="t" style="left:957.30px;top:2034.00px;font-size:15.200000000000001px;color:#fff;-webkit-text-stroke-width:0.22px;transform:scaleX(0.9989);">MPa</span>
<span class="t" style="left:1389.70px;top:1964.00px;font-size:18px;color:#fff;font-weight:700;transform:scaleX(0.9453);">Allowable Hydrostatic Test Stress (St)  (as per Cl. 5.6.2.2)</span>
<span class="t" style="left:1118.80px;top:2028.00px;font-size:15.4px;color:#fff;-webkit-text-stroke-width:0.22px;transform:scaleX(1.0229);">St = 3 / 4 x Yield Stress</span>
<span class="t" style="left:1118.80px;top:2053.00px;font-size:15.4px;color:#fff;-webkit-text-stroke-width:0.22px;transform:scaleX(1.0542);">St = 3 / 4 x 250</span>
<span class="t" style="left:1118.80px;top:2078.00px;font-size:15.4px;color:#fff;-webkit-text-stroke-width:0.22px;transform:scaleX(1.0264);">St = 187.50   MPa</span>
<span class="t" style="left:1118.80px;top:2103.00px;font-size:15.4px;color:#fff;-webkit-text-stroke-width:0.22px;transform:scaleX(1.0262);">St = <span style="color:#009688">171.43   MPa</span></span>
<span class="t" style="left:1286.00px;top:2028.00px;font-size:15.4px;color:#fff;-webkit-text-stroke-width:0.22px;transform:scaleX(0.8834);">OR</span>
<span class="t" style="left:1286.00px;top:2053.00px;font-size:15.4px;color:#fff;-webkit-text-stroke-width:0.22px;transform:scaleX(0.8834);">OR</span>
<span class="t" style="left:1286.00px;top:2078.00px;font-size:15.4px;color:#fff;-webkit-text-stroke-width:0.22px;transform:scaleX(0.8834);">OR</span>
<span class="t" style="left:1310.00px;top:2028.00px;font-size:15.4px;color:#fff;-webkit-text-stroke-width:0.22px;transform:scaleX(1.0229);">St = 3 / 7 x Tensile Stress</span>
<span class="t" style="left:1310.00px;top:2053.00px;font-size:15.4px;color:#fff;-webkit-text-stroke-width:0.22px;transform:scaleX(1.0436);">St = 3 / 7 x 400</span>
<span class="t" style="left:1310.00px;top:2078.00px;font-size:15.4px;color:#fff;-webkit-text-stroke-width:0.22px;transform:scaleX(1.0175);">St = 171.43   MPa</span>
<span class="t" style="left:1892.70px;top:2027.00px;font-size:15.200000000000001px;color:#fff;-webkit-text-stroke-width:0.22px;transform:scaleX(0.9871);">St =</span>
<span class="t" style="left:1984.80px;top:2066.00px;font-size:14.8px;color:#fff;-webkit-text-stroke-width:0.22px;transform:scaleX(1.0295);">171.43</span>
<span class="t" style="left:1896.50px;top:2093.00px;font-size:15.200000000000001px;color:#fff;-webkit-text-stroke-width:0.22px;transform:scaleX(0.9957);">MPa</span>
<span class="t" style="left:45.80px;top:1369.00px;font-size:17.0px;color:#009688;-webkit-text-stroke-width:0.5px;transform:scaleX(1.0046);">Design thickness: (For Course:1) (1-Foot Method as per Cl. 5.6.3.2)</span>
<span class="t" style="left:47.00px;top:1416.00px;font-size:15.4px;color:#fff;-webkit-text-stroke-width:0.22px;transform:scaleX(0.9878);">td = (4.9 x D x ((Ho + h)- 0.3) x Gp / (Sd)) + CA</span>
<span class="t" style="left:47.00px;top:1441.00px;font-size:15.4px;color:#fff;-webkit-text-stroke-width:0.22px;transform:scaleX(1.0501);">td = 4.9 x 38.0280 x (18.666 -0.3) x1.016 / (150.68 ) +1.5</span>
<span class="t" style="left:47.00px;top:1466.00px;font-size:15.4px;color:#fff;-webkit-text-stroke-width:0.22px;transform:scaleX(1.0524);">td = <span style="color:#009688">24.58   mm</span></span>
<span class="t" style="left:45.80px;top:1516.00px;font-size:17.0px;color:#009688;-webkit-text-stroke-width:0.5px;transform:scaleX(0.9989);">Test thickness: (For Course:1)</span>
<span class="t" style="left:47.00px;top:1563.00px;font-size:15.4px;color:#fff;-webkit-text-stroke-width:0.22px;transform:scaleX(1.0135);">tt = (4.9 x D x ((ho + h')- 0.3) x Gw) / (St)</span>
<span class="t" style="left:47.00px;top:1587.00px;font-size:15.4px;color:#fff;-webkit-text-stroke-width:0.22px;transform:scaleX(1.0542);">tt = 4.9 x 38.0280 x (18.769 -0.3) x 1 / (171.43 )</span>
<span class="t" style="left:47.00px;top:1612.00px;font-size:15.4px;color:#fff;-webkit-text-stroke-width:0.22px;transform:scaleX(1.0633);">tt = <span style="color:#009688">20.08   mm</span></span>
<span class="t" style="left:1116.00px;top:1369.00px;font-size:17.0px;color:#009688;-webkit-text-stroke-width:0.5px;transform:scaleX(1.0060);">Design Condition is Governing</span>
<span class="t" style="left:1146.20px;top:1406.00px;font-size:15.2px;color:#fff;-webkit-text-stroke-width:0.22px;transform:scaleX(1.0432);">Minimum thickness of shell = <span style="color:#009688">8   mm</span> (as per Cl. 5.6.1.1)</span>
<span class="t" style="left:1621.50px;top:1406.00px;font-size:15.2px;color:#fff;-webkit-text-stroke-width:0.22px;transform:scaleX(1.0469);">Maximum permitted thickness = <span style="color:#009688">40   mm</span> (as per Cl. 4.2.2)</span>
<span class="t" style="left:1497.60px;top:1440.00px;font-size:15.2px;color:#fff;-webkit-text-stroke-width:0.22px;transform:scaleX(0.9934);">As per Cl. 5.6.1.1 (incl. CA)</span>
<span class="t" style="left:1242.15px;top:1484.00px;font-size:16px;color:#fff;font-weight:700;transform:scaleX(0.9379);">Nominal Tank Diameter in m</span>
<span class="t" style="left:1701.80px;top:1484.00px;font-size:16px;color:#fff;font-weight:700;transform:scaleX(0.9289);">Nominal Plate Thickness in mm</span>
<span class="t" style="left:1299.45px;top:1547.00px;font-size:15.4px;color:#fff;-webkit-text-stroke-width:0.22px;transform:scaleX(1.0373);">less than 15</span>
<span class="t" style="left:1809.23px;top:1547.00px;font-size:15.4px;color:#fff;-webkit-text-stroke-width:0.22px;transform:scaleX(0.9500);">5</span>
<span class="t" style="left:1301.70px;top:1609.00px;font-size:15.4px;color:#fff;-webkit-text-stroke-width:0.22px;transform:scaleX(1.0145);">15 &lt; D &lt; 36</span>
<span class="t" style="left:1809.23px;top:1609.00px;font-size:15.4px;color:#fff;-webkit-text-stroke-width:0.22px;transform:scaleX(0.9500);">6</span>
<span class="t" style="left:1301.70px;top:1670.00px;font-size:15.4px;color:#fff;-webkit-text-stroke-width:0.22px;transform:scaleX(1.0145);">36 &lt; D &lt; 60</span>
<span class="t" style="left:1809.23px;top:1670.00px;font-size:15.4px;color:#fff;-webkit-text-stroke-width:0.22px;transform:scaleX(0.9500);">8</span>
<span class="t" style="left:1326.55px;top:1733.00px;font-size:15.4px;color:#fff;-webkit-text-stroke-width:0.22px;transform:scaleX(1.0497);">&gt; 60</span>
<span class="t" style="left:1805.17px;top:1733.00px;font-size:15.4px;color:#fff;-webkit-text-stroke-width:0.22px;transform:scaleX(0.9500);">10</span>
<span class="t" style="left:1128.35px;top:1795.00px;font-size:15.6px;color:#009688;-webkit-text-stroke-width:0.5px;transform:scaleX(1.0325);">For diameters less than 15 m but greater than 3.2 m ,the nominal thickness of the lowest shell course shall not be less than 6 mm</span>
</div>
</body></html>
